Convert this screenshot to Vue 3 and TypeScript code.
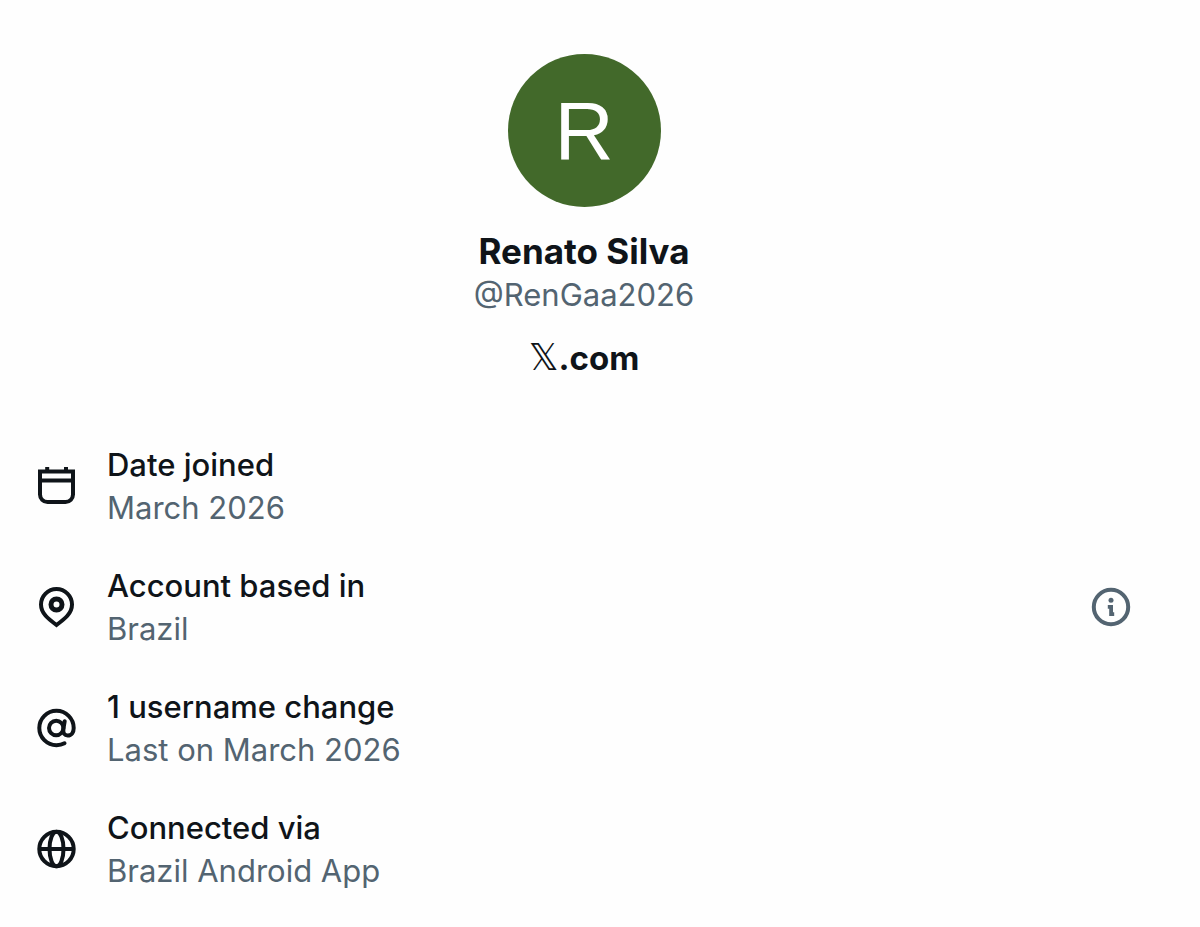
<script setup lang="ts">
interface AccountFact {
  icon: 'calendar' | 'pin' | 'at' | 'globe'
  label: string
  value: string
  info?: boolean
}

const facts: AccountFact[] = [
  { icon: 'calendar', label: 'Date joined', value: 'March 2026' },
  { icon: 'pin', label: 'Account based in', value: 'Brazil', info: true },
  { icon: 'at', label: '1 username change', value: 'Last on March 2026' },
  { icon: 'globe', label: 'Connected via', value: 'Brazil Android App' },
]
</script>

<template>
  <main class="about">
    <header class="profile">
      <div class="avatar">R</div>
      <h1 class="name">Renato Silva</h1>
      <p class="handle">@RenGaa2026</p>
      <p class="site"><span class="mark">𝕏</span>.com</p>
    </header>

    <ul class="facts">
      <li v-for="fact in facts" :key="fact.label" class="fact">
        <svg class="icon" viewBox="0 0 42 42" aria-hidden="true">
          <g v-if="fact.icon === 'calendar'">
            <path d="M4 6.500h33v23a7.500 7.500 0 0 1-7.500 7.500h-18a7.500 7.500 0 0 1-7.500-7.500zM4 15.500h33" />
            <path d="M11.200 2v4M30 2v4" />
          </g>
          <g v-else-if="fact.icon === 'pin'">
            <path d="M20.500 39C12.500 33 5 27.500 5 18.500a15.500 15.500 0 0 1 31 0C36 27.500 28.500 33 20.500 39z" />
            <circle cx="20.500" cy="18.500" r="5.500" class="ring" />
          </g>
          <g v-else-if="fact.icon === 'at'" stroke-linecap="round">
            <circle cx="20.200" cy="21" r="7.200" />
            <path d="M28.700 14.200L27.400 22C26.700 26.300 28.800 28.500 31.600 28.500C35.800 28.500 37.700 25 37.700 21A17.200 17.200 0 1 0 20.500 38.200Q25 38.200 28.500 36.300" />
          </g>
          <g v-else>
            <circle cx="20.500" cy="21" r="17.200" />
            <path d="M3.500 21h34" />
            <ellipse cx="20.500" cy="21" rx="7" ry="17.200" />
          </g>
        </svg>
        <div class="copy">
          <p class="label">{{ fact.label }}</p>
          <p class="value">{{ fact.value }}</p>
        </div>
        <button v-if="fact.info" type="button" class="info" :aria-label="`More about ${fact.label}`">
          <svg viewBox="0 0 42 42" aria-hidden="true">
            <circle cx="21" cy="21" r="17.200" class="info-ring" />
            <circle cx="21" cy="14.300" r="2.500" />
            <path d="M17.800 19h5.200v7.200h1.200v3.800h-5v-7.200h-1.400z" />
          </svg>
        </button>
      </li>
    </ul>
  </main>
</template>

<style>
body {
  margin: 0;
  background: #fefefe;
}
</style>

<style scoped>
.about {
  box-sizing: border-box;
  padding: 54px 68px 32px 36px;
  color: #0f1419;
  font-family: Inter, "Liberation Sans", sans-serif;
  font-size: 31px;
  line-height: 43px;
}

.about p,
.about h1 {
  margin: 0;
}

.profile {
  display: flex;
  flex-direction: column;
  align-items: center;
}

.avatar {
  display: grid;
  place-items: center;
  width: 153px;
  height: 153px;
  border-radius: 50%;
  background: #42692a;
  color: #fff;
  font-family: "Liberation Sans", Arial, sans-serif;
  font-size: 82px;
}

.profile .name {
  margin-top: 23px;
  font-size: 35px;
  font-weight: 700;
  line-height: 43px;
}

.handle,
.value {
  color: #536471;
}

.profile .site {
  margin-top: 21px;
  font-size: 33px;
  font-weight: 700;
}

.mark {
  font-family: "DejaVu Sans", sans-serif;
  font-size: 37px;
  font-weight: 400;
  line-height: 1;
}

.facts {
  display: flex;
  flex-direction: column;
  gap: 35px;
  margin: 63px 0 0;
  padding: 0;
  list-style: none;
}

.fact {
  display: flex;
  align-items: center;
}

.icon {
  flex: none;
  width: 42px;
  height: 42px;
  margin-right: 29px;
  fill: none;
  stroke: #0f1419;
  stroke-width: 4;
}

.ring {
  stroke-width: 5;
}

.copy {
  flex: 1;
}

.label {
  font-weight: 500;
}

.info {
  display: block;
  width: 42px;
  height: 42px;
  padding: 0;
  border: 0;
  background: none;
  cursor: pointer;
}

.info svg {
  display: block;
  fill: #536471;
}

.info .info-ring {
  fill: none;
  stroke: #536471;
  stroke-width: 4;
}
</style>
